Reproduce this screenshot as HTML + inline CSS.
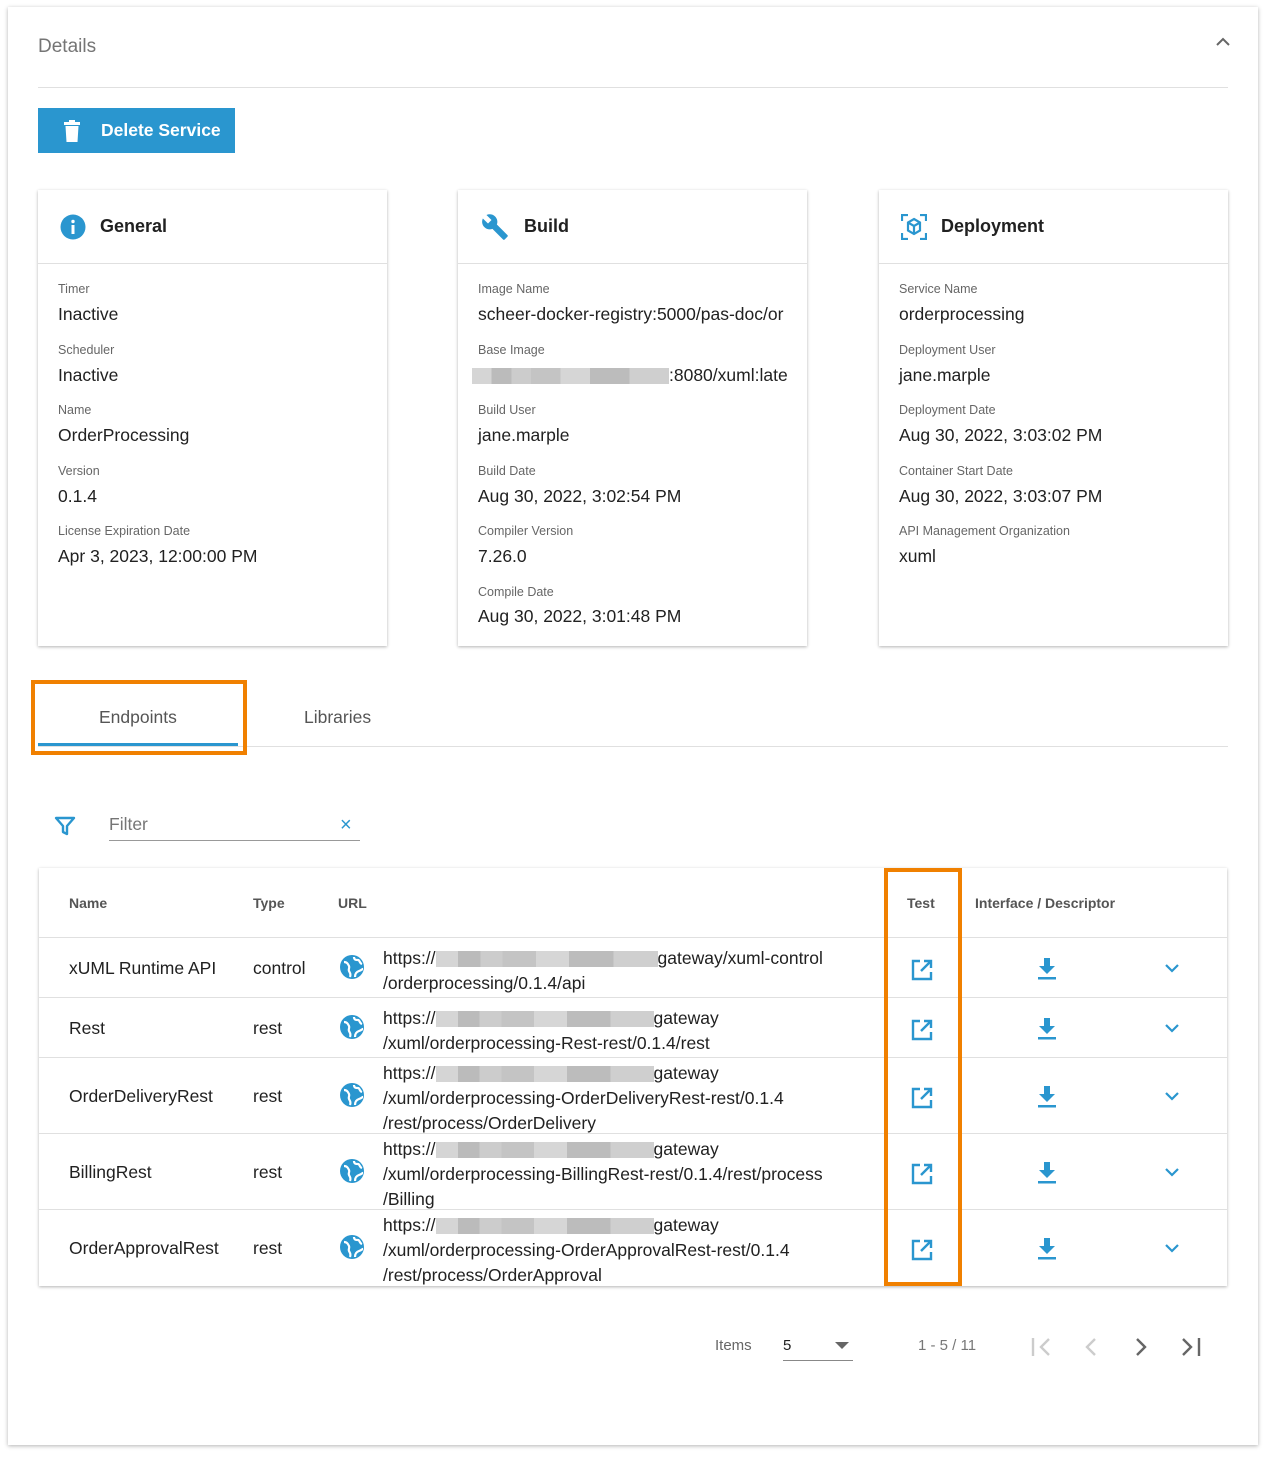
<!DOCTYPE html>
<html><head><meta charset="utf-8"><style>
*{box-sizing:border-box;margin:0;padding:0}
body{width:1269px;height:1457px;background:#fff;font-family:"Liberation Sans",Roboto,sans-serif;color:#212121;position:relative;overflow:hidden}
.a{position:absolute}
.outer{left:8px;top:7px;width:1250px;height:1438px;box-shadow:0 1px 4px rgba(0,0,0,.3);background:#fff}
.card{width:349px;height:456px;top:190px;box-shadow:0 1px 3px rgba(0,0,0,.3);background:#fff}
.card .hd{height:74px;border-bottom:1px solid #e0e0e0;display:flex;align-items:center;padding-left:22px;font-weight:bold;font-size:18px}
.card .hd svg{margin-right:14px}
.lab{font-size:12.5px;color:#666;position:absolute;left:20px}
.val{font-size:17.5px;color:#212121;position:absolute;left:20px;white-space:nowrap}
.th{font-size:14px;color:#555;font-weight:bold;top:895px}
.row{left:39px;width:1188px;border-top:1px solid #e0e0e0}
.cell{font-size:17.5px;position:absolute}
.blur{display:inline-block;height:16px;vertical-align:middle;background:linear-gradient(90deg,#d5d5d5 0 10%,#bbb 10% 20%,#ccc 20% 30%,#c4c4c4 30% 45%,#d6d6d6 45% 60%,#bcbcbc 60% 80%,#cfcfcf 80%)}
</style></head><body>
<div class="a outer"></div>
<div class="a" style="left:38px;top:36px;font-size:19px;color:#757575">Details</div>
<svg class="a" style="left:1215px;top:36px" width="16" height="12"><path d="M2 9l6-6 6 6" stroke="#666" stroke-width="2" fill="none"/></svg>
<div class="a" style="left:38px;top:87px;width:1190px;height:1px;background:#e0e0e0"></div>
<div class="a" style="left:38px;top:108px;width:197px;height:45px;background:#2a96cf;color:#fff;font-weight:bold;font-size:17.5px;display:flex;align-items:center">
<svg style="margin:0 20px 0 25px" width="18" height="24" viewBox="0 0 18 24"><rect x="1" y="3" width="16" height="3" fill="#fff"/><rect x="6" y="1" width="6" height="3" fill="#fff"/><path d="M2.5 7h13l-1 16h-11z" fill="#fff"/></svg>Delete Service</div>

<div class="a card" style="left:38px">
<div class="hd"><svg width="26" height="26"><circle cx="13" cy="13" r="12.5" fill="#2a96cf"/><rect x="11.5" y="11" width="3" height="9" fill="#fff"/><circle cx="13" cy="7.5" r="1.7" fill="#fff"/></svg>General</div>
<div class="lab" style="top:92px">Timer</div><div class="val" style="top:114px">Inactive</div>
<div class="lab" style="top:153px">Scheduler</div><div class="val" style="top:175px">Inactive</div>
<div class="lab" style="top:213px">Name</div><div class="val" style="top:235px">OrderProcessing</div>
<div class="lab" style="top:274px">Version</div><div class="val" style="top:296px">0.1.4</div>
<div class="lab" style="top:334px">License Expiration Date</div><div class="val" style="top:356px">Apr 3, 2023, 12:00:00 PM</div>
</div>
<div class="a card" style="left:458px;overflow:hidden">
<div class="hd"><svg width="30" height="28" viewBox="0 0 24 24"><path d="M22.7 19l-9.1-9.1c.9-2.3.4-5-1.5-6.9-2-2-5-2.4-7.4-1.3L9 6 6 9 1.6 4.7C.4 7.1.9 10.1 2.9 12.1c1.9 1.9 4.6 2.4 6.9 1.5l9.1 9.1c.4.4 1 .4 1.4 0l2.3-2.3c.5-.4.5-1.100.1-1.4z" fill="#2a96cf"/></svg>Build</div>
<div class="lab" style="top:92px">Image Name</div><div class="val" style="top:114px">scheer-docker-registry:5000/pas-doc/or</div>
<div class="lab" style="top:153px">Base Image</div><div class="val" style="top:175px;left:14px"><span class="blur" style="width:197px"></span>:8080/xuml:late</div>
<div class="lab" style="top:213px">Build User</div><div class="val" style="top:235px">jane.marple</div>
<div class="lab" style="top:274px">Build Date</div><div class="val" style="top:296px">Aug 30, 2022, 3:02:54 PM</div>
<div class="lab" style="top:334px">Compiler Version</div><div class="val" style="top:356px">7.26.0</div>
<div class="lab" style="top:395px">Compile Date</div><div class="val" style="top:416px">Aug 30, 2022, 3:01:48 PM</div>
</div>
<div class="a card" style="left:879px">
<div class="hd"><svg width="26" height="26" viewBox="0 0 26 26" fill="none" stroke="#2a96cf" stroke-width="2.2"><path d="M1 7V1h6M19 1h6v6M25 19v6h-6M7 25H1v-6"/><path d="M13 5l6 3.5v8L13 20l-6-3.5v-8z M7 8.5l6 3.5 6-3.5M13 12v8"/></svg>Deployment</div>
<div class="lab" style="top:92px">Service Name</div><div class="val" style="top:114px">orderprocessing</div>
<div class="lab" style="top:153px">Deployment User</div><div class="val" style="top:175px">jane.marple</div>
<div class="lab" style="top:213px">Deployment Date</div><div class="val" style="top:235px">Aug 30, 2022, 3:03:02 PM</div>
<div class="lab" style="top:274px">Container Start Date</div><div class="val" style="top:296px">Aug 30, 2022, 3:03:07 PM</div>
<div class="lab" style="top:334px">API Management Organization</div><div class="val" style="top:356px">xuml</div>
</div>

<div class="a" style="left:38px;top:746px;width:1190px;height:1px;background:#e0e0e0"></div>
<div class="a" style="left:38px;top:743px;width:200px;height:3px;background:#2a96cf"></div>
<div class="a" style="left:99px;top:707px;font-size:17.5px;color:#555">Endpoints</div>
<div class="a" style="left:304px;top:707px;font-size:17.5px;color:#555">Libraries</div>
<div class="a" style="left:31px;top:680px;width:216px;height:75px;border:4px solid #f08000"></div>

<svg class="a" style="left:54px;top:815px" width="22" height="22" viewBox="0 0 22 22"><path d="M2 3h18l-7 8v8l-4-2v-6z" fill="none" stroke="#2a96cf" stroke-width="2.4" stroke-linejoin="round"/></svg>
<div class="a" style="left:109px;top:814px;font-size:17.5px;color:#757575">Filter</div>
<div class="a" style="left:340px;top:814px;font-size:20px;color:#2a96cf">×</div>
<div class="a" style="left:109px;top:840px;width:251px;height:1px;background:#999"></div>

<div class="a" style="left:39px;top:868px;width:1188px;height:418px;box-shadow:0 1px 3px rgba(0,0,0,.3)"></div>
<div class="a th" style="left:69px">Name</div>
<div class="a th" style="left:253px">Type</div>
<div class="a th" style="left:338px">URL</div>
<div class="a th" style="left:907px">Test</div>
<div class="a th" style="left:975px">Interface / Descriptor</div>

<div id="rows"></div>
<div class="a row" style="top:937px;height:60px"></div>
<div class="a row" style="top:997px;height:60px"></div>
<div class="a row" style="top:1057px;height:76px"></div>
<div class="a row" style="top:1133px;height:76px"></div>
<div class="a row" style="top:1209px;height:76px"></div>

<!-- row texts -->
<div class="a cell" style="left:69px;top:958px">xUML Runtime API</div><div class="a cell" style="left:253px;top:958px">control</div>
<div class="a cell" style="left:383px;top:946px;line-height:25px">https://<span class="blur" style="width:222px"></span>gateway/xuml-control<br>/orderprocessing/0.1.4/api</div>
<div class="a cell" style="left:69px;top:1018px">Rest</div><div class="a cell" style="left:253px;top:1018px">rest</div>
<div class="a cell" style="left:383px;top:1006px;line-height:25px">https://<span class="blur" style="width:218px"></span>gateway<br>/xuml/orderprocessing-Rest-rest/0.1.4/rest</div>
<div class="a cell" style="left:69px;top:1086px">OrderDeliveryRest</div><div class="a cell" style="left:253px;top:1086px">rest</div>
<div class="a cell" style="left:383px;top:1061px;line-height:25px">https://<span class="blur" style="width:218px"></span>gateway<br>/xuml/orderprocessing-OrderDeliveryRest-rest/0.1.4<br>/rest/process/OrderDelivery</div>
<div class="a cell" style="left:69px;top:1162px">BillingRest</div><div class="a cell" style="left:253px;top:1162px">rest</div>
<div class="a cell" style="left:383px;top:1137px;line-height:25px">https://<span class="blur" style="width:218px"></span>gateway<br>/xuml/orderprocessing-BillingRest-rest/0.1.4/rest/process<br>/Billing</div>
<div class="a cell" style="left:69px;top:1238px">OrderApprovalRest</div><div class="a cell" style="left:253px;top:1238px">rest</div>
<div class="a cell" style="left:383px;top:1213px;line-height:25px">https://<span class="blur" style="width:218px"></span>gateway<br>/xuml/orderprocessing-OrderApprovalRest-rest/0.1.4<br>/rest/process/OrderApproval</div>

<svg width="0" height="0" style="position:absolute"><defs>
<g id="globe"><circle cx="12" cy="12" r="12" fill="#2a96cf"/><path d="M4 7c3 0 4 2 5 4s-1 3 0 5 2 3 1 6M14 2c0 3 2 3 4 3s1 3 4 4M15 22c0-3 1-5 4-6s3-2 4-2" stroke="#fff" stroke-width="2.2" fill="none"/></g>
<g id="ext"><path d="M10 3H3v18h18v-7" fill="none" stroke="#2a96cf" stroke-width="2.4"/><path d="M14 3h7v7M21 3l-10 10" fill="none" stroke="#2a96cf" stroke-width="2.4"/></g>
<g id="dl"><path d="M7 0h6v8h5l-8 8-8-8h5z" fill="#2a96cf"/><rect x="1" y="19" width="18" height="2.5" fill="#2a96cf"/></g>
<g id="chev"><path d="M2 2l6 6 6-6" fill="none" stroke="#2a96cf" stroke-width="2.2"/></g>
</defs></svg>

<svg class="a" style="left:340px;top:955px" width="25" height="25"><use href="#globe"/></svg>
<svg class="a" style="left:340px;top:1015px" width="25" height="25"><use href="#globe"/></svg>
<svg class="a" style="left:340px;top:1083px" width="25" height="25"><use href="#globe"/></svg>
<svg class="a" style="left:340px;top:1159px" width="25" height="25"><use href="#globe"/></svg>
<svg class="a" style="left:340px;top:1235px" width="25" height="25"><use href="#globe"/></svg>

<svg class="a" style="left:910px;top:958px" width="24" height="24"><use href="#ext"/></svg>
<svg class="a" style="left:910px;top:1018px" width="24" height="24"><use href="#ext"/></svg>
<svg class="a" style="left:910px;top:1086px" width="24" height="24"><use href="#ext"/></svg>
<svg class="a" style="left:910px;top:1162px" width="24" height="24"><use href="#ext"/></svg>
<svg class="a" style="left:910px;top:1238px" width="24" height="24"><use href="#ext"/></svg>

<svg class="a" style="left:1037px;top:958px" width="20" height="22"><use href="#dl"/></svg>
<svg class="a" style="left:1037px;top:1018px" width="20" height="22"><use href="#dl"/></svg>
<svg class="a" style="left:1037px;top:1086px" width="20" height="22"><use href="#dl"/></svg>
<svg class="a" style="left:1037px;top:1162px" width="20" height="22"><use href="#dl"/></svg>
<svg class="a" style="left:1037px;top:1238px" width="20" height="22"><use href="#dl"/></svg>

<svg class="a" style="left:1164px;top:963px" width="16" height="12"><use href="#chev"/></svg>
<svg class="a" style="left:1164px;top:1023px" width="16" height="12"><use href="#chev"/></svg>
<svg class="a" style="left:1164px;top:1091px" width="16" height="12"><use href="#chev"/></svg>
<svg class="a" style="left:1164px;top:1167px" width="16" height="12"><use href="#chev"/></svg>
<svg class="a" style="left:1164px;top:1243px" width="16" height="12"><use href="#chev"/></svg>

<div class="a" style="left:884px;top:868px;width:78px;height:418px;border:4px solid #f08000"></div>

<div class="a" style="left:715px;top:1337px;font-size:15px;color:#666">Items</div>
<div class="a" style="left:783px;top:1337px;font-size:15px;color:#212121">5</div>
<svg class="a" style="left:835px;top:1342px" width="14" height="8"><path d="M0 0h14l-7 7z" fill="#666"/></svg>
<div class="a" style="left:783px;top:1360px;width:70px;height:1px;background:#888"></div>
<div class="a" style="left:918px;top:1337px;font-size:15px;color:#777">1 - 5 / 11</div>
<svg class="a" style="left:1030px;top:1337px" width="24" height="20"><path d="M3 1v18" stroke="#ccc" stroke-width="2.4"/><path d="M19 2l-8 8 8 8" stroke="#ccc" stroke-width="2.4" fill="none"/></svg>
<svg class="a" style="left:1083px;top:1337px" width="16" height="20"><path d="M12 2l-8 8 8 8" stroke="#ccc" stroke-width="2.4" fill="none"/></svg>
<svg class="a" style="left:1133px;top:1337px" width="16" height="20"><path d="M4 2l8 8-8 8" stroke="#666" stroke-width="2.4" fill="none"/></svg>
<svg class="a" style="left:1180px;top:1337px" width="24" height="20"><path d="M3 2l8 8-8 8" stroke="#666" stroke-width="2.4" fill="none"/><path d="M19 1v18" stroke="#666" stroke-width="2.4"/></svg>
</body></html>
